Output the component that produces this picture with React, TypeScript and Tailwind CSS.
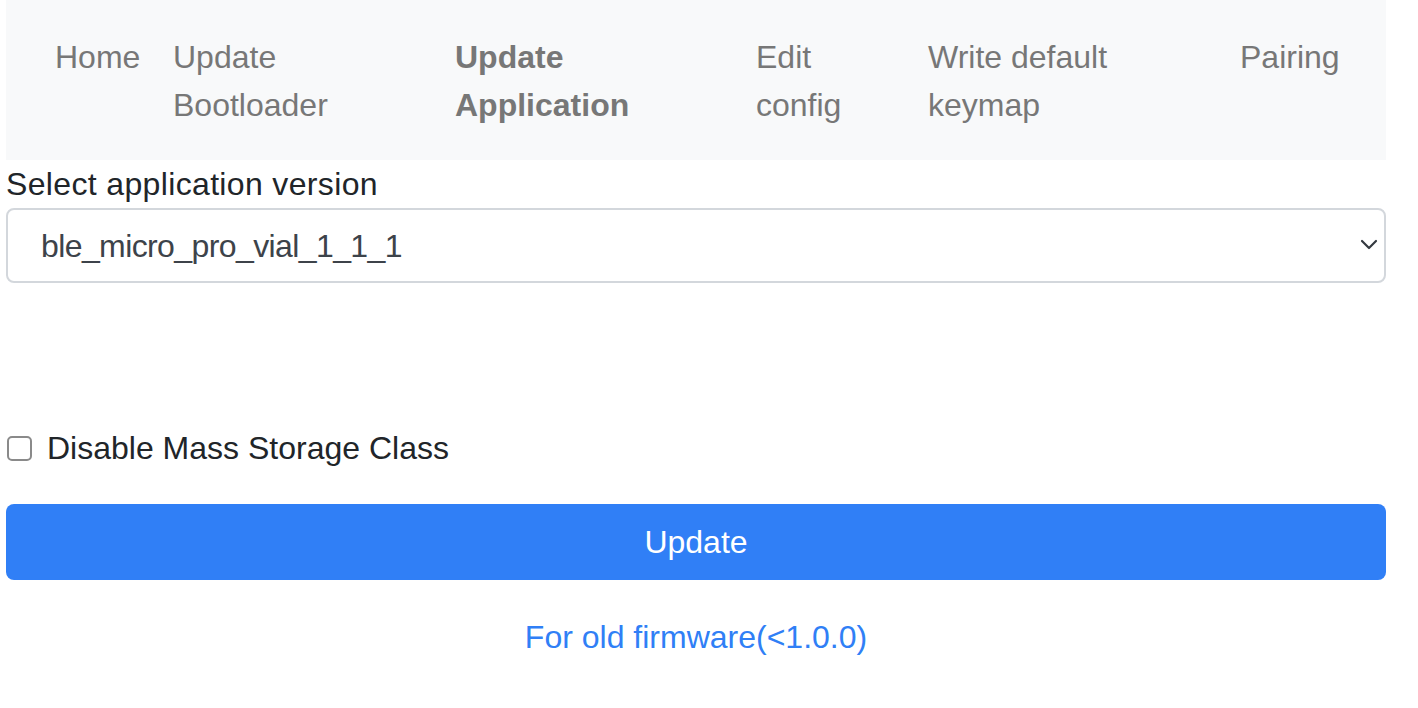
import React, { useState } from 'react';

const navItems = [
  { label: 'Home', width: 'w-[118px]' },
  { label: 'Update Bootloader', width: 'w-[282px]' },
  { label: 'Update Application', width: 'w-[301px]', active: true },
  { label: 'Edit config', width: 'w-[172px]' },
  { label: 'Write default keymap', width: 'w-[312px]' },
  { label: 'Pairing', width: 'w-[140px]' },
];

export default function App() {
  const [version, setVersion] = useState('ble_micro_pro_vial_1_1_1');
  const [disableMsc, setDisableMsc] = useState(false);

  return (
    <div className="ml-[6px] w-[1380px] font-['Liberation_Sans',Arial,sans-serif] text-[32px] leading-[48px] text-[#212529]">
      <nav className="flex bg-[#f8f9fa] pl-[49px] pt-[33px] pb-[31px]">
        {navItems.map((item) => (
          <div key={item.label} className={`${item.width} shrink-0`}>
            <a
              href="#"
              className={
                item.active
                  ? 'block pr-[60px] font-bold text-[#777777]'
                  : 'block pr-[60px] text-[#777777]'
              }
            >
              {item.label.split(' ').length > 1 ? (
                <>
                  {item.label.split(' ').slice(0, -1).join(' ')}
                  <br />
                  {item.label.split(' ').slice(-1)}
                </>
              ) : (
                item.label
              )}
            </a>
          </div>
        ))}
      </nav>

      <label htmlFor="version" className="block tracking-[0.35px]">
        Select application version
      </label>
      <div className="relative">
        <select
          id="version"
          value={version}
          onChange={(e) => setVersion(e.target.value)}
          className="block h-[75px] w-full appearance-none rounded-[8px] border-2 border-[#d3d7dc] bg-white pl-[33px] text-[32px] tracking-[-0.6px] text-[#3d434a] outline-none"
        >
          <option value="ble_micro_pro_vial_1_1_1">ble_micro_pro_vial_1_1_1</option>
          <option value="ble_micro_pro_vial_1_1_0">ble_micro_pro_vial_1_1_0</option>
          <option value="ble_micro_pro_default_1_1_1">ble_micro_pro_default_1_1_1</option>
        </select>
        <svg
          className="pointer-events-none absolute right-[7px] top-[29px]"
          width="20"
          height="14"
          viewBox="0 0 20 14"
          fill="none"
          stroke="#343a40"
          strokeWidth="2.2"
          strokeLinecap="round"
          strokeLinejoin="round"
        >
          <path d="M3 4l7 7 7-7" />
        </svg>
      </div>

      <div className="h-[141px]" />

      <div className="flex items-center">
        <input
          id="msc"
          type="checkbox"
          checked={disableMsc}
          onChange={(e) => setDisableMsc(e.target.checked)}
          className="ml-px h-[25px] w-[25px] appearance-none rounded-[5px] border-2 border-[#8a8a8a] bg-white"
        />
        <label htmlFor="msc" className="ml-[15px]">
          Disable Mass Storage Class
        </label>
      </div>

      <button
        type="button"
        className="mt-[32px] block h-[76px] w-full rounded-[8px] bg-[#307ff6] text-center text-white"
      >
        Update
      </button>

      <div className="mt-[33px] text-center">
        <a href="#" className="text-[#307ff6]">
          For old firmware(&lt;1.0.0)
        </a>
      </div>
    </div>
  );
}
